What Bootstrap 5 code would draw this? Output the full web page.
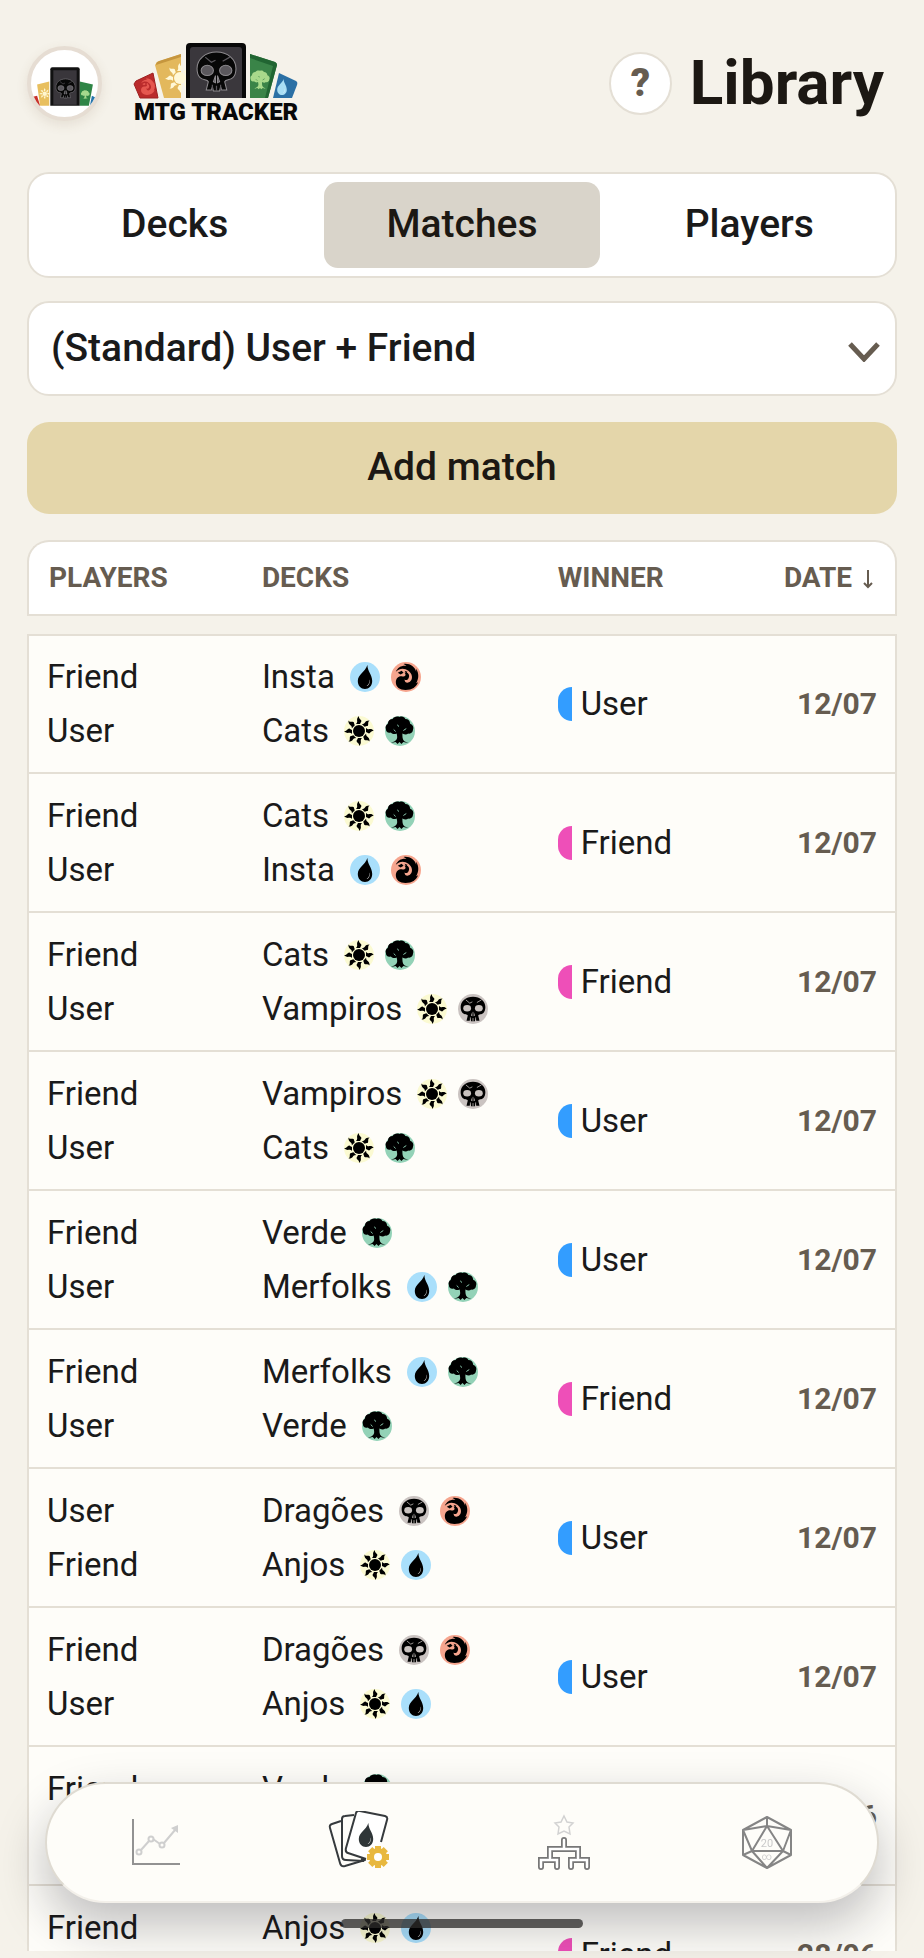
<!DOCTYPE html>
<html lang="en">
<head>
<meta charset="utf-8">
<meta name="viewport" content="width=device-width, initial-scale=1">
<title>MTG Tracker – Library</title>
<link href="https://cdn.jsdelivr.net/npm/bootstrap@5.3.0/dist/css/bootstrap.min.css" rel="stylesheet">
<style>
  :root { --ink: #1c1813; --muted: #665c50; --line: #e4dfd5; --paper: #fefdf9; }
  body { font-family: Roboto, "Noto Sans", sans-serif; color: #1a1a1a; background: #f5f2ea; }
  .screen { padding: 43px 27px 7px; }
  .profile { width: 75px; height: 75px; border: 4px solid #e6ddd3; background: #fff; box-shadow: 0 4px 12px rgba(120, 90, 60, .12); }
  .profile svg { width: 67px; height: 67px; }
  .heading { gap: 18px; }
  .help { width: 63px; height: 63px; border: 2px solid var(--line); background: #fff; color: var(--muted); font-size: 38px; line-height: 1; font-weight: 900; }
  .title { font-size: 62px; line-height: 80px; font-weight: 700; color: var(--ink); padding-right: 13px; }
  .panel { background: #fff; border: 2px solid var(--line); border-radius: 22px; }
  .tabs { margin-top: 49px; padding: 8px; gap: 12px; }
  .tabs button { border: 0; background: transparent; border-radius: 14px; height: 86px; font-size: 39px; font-weight: 500; line-height: 48px; color: #1a1a1a; padding: 0 0 3px; }
  .tabs button.active { background: #d9d4ca; color: var(--ink); }
  .season { margin-top: 23px; height: 95px; padding: 0 60px 1px 22px; font-size: 39px; font-weight: 500; color: #1a1a1a;
    background: #fff url("data:image/svg+xml,%3Csvg xmlns='http://www.w3.org/2000/svg' viewBox='0 0 32 20'%3E%3Cpath d='M2 2l14 15L30 2' fill='none' stroke='%23665c50' stroke-width='5'/%3E%3C/svg%3E") no-repeat right 15px top 39px / 32px 20px; }
  .add { margin-top: 26px; height: 92px; border-radius: 22px; background: #e4d6aa; font-size: 39px; font-weight: 500; color: var(--ink); padding: 0 0 2px; border: 0; }
  .add:hover { background: #dccc9a; }
  .list { margin-top: 26px; min-height: 0; }
  .matches { width: 100%; table-layout: fixed; border-collapse: separate; border-spacing: 0; }
  .matches th { height: 76px; padding: 0; background: #fff; color: var(--muted); font-size: 28px; line-height: 36px; font-weight: 700; border: solid var(--line); border-width: 2px 0; }
  .matches th:first-child { border-left-width: 2px; border-top-left-radius: 22px; padding-left: 20px; }
  .matches th:last-child { border-right-width: 2px; border-top-right-radius: 22px; padding-right: 22px; text-align: right; }
  .matches th svg { margin-left: 4px; }
  .matches tbody::before { content: ""; display: table-row; height: 18px; }
  .matches td { height: 139px; padding: 0; background: var(--paper); font-size: 33px; line-height: 54px; border-bottom: 2px solid var(--line); }
  .matches tr:first-child td { border-top: 2px solid var(--line); height: 140px; }
  .matches td:first-child { border-left: 2px solid var(--line); padding-left: 18px; }
  .matches td:last-child { border-right: 2px solid var(--line); padding-right: 18px; text-align: right; color: var(--muted); font-size: 30px; font-weight: 700; }
  .c1 { width: 27%; } .c2 { width: 34%; } .c3 { width: 21%; } .c4 { width: 18%; }
  .mana { width: 30px; height: 30px; margin-left: 11px; }
  .mana:first-of-type { margin-left: 15px; }
  .half { width: 14px; height: 34px; border-radius: 14px 0 0 14px; margin-right: 9px; }
  .blue { background: #339dff; } .pink { background: #ee4fb8; }
  .dock { left: 45px; right: 45px; bottom: 55px; height: 121px; padding: 0 8px; border: 2px solid #dfdbd2; border-bottom-color: #f3f0ea; border-radius: 61px; background: var(--paper); box-shadow: 0 22px 50px rgba(20, 20, 30, .27); }
  .dock a { display: flex; justify-content: center; align-items: center; flex: 1 1 0; }
  .dock svg { width: 64px; height: 64px; }
  .home-bar { bottom: 30px; left: 50%; transform: translateX(-50%); width: 242px; height: 9px; border-radius: 5px; background: rgba(45, 43, 42, .76); }
  .wordmark { font: 900 24px Roboto, sans-serif; }
</style>
</head>
<body>
<svg class="d-none" xmlns="http://www.w3.org/2000/svg">
  <symbol id="skull" viewBox="0 0 40 40">
    <path d="M20 1C9 1 1 8 1 17c0 4 1 7 3 9 3 3 7 1 8 4l-2 8h5l1-3 1 4h6l1-4 1 3h5l-2-8c1-3 5-1 8-4 2-2 3-5 3-9C39 8 31 1 20 1z"/>
    <g fill="var(--eye,#c9c2bf)"><ellipse cx="11" cy="19" rx="6" ry="5"/><ellipse cx="29" cy="19" rx="6" ry="5"/><path d="M19 24l-2 6 2 1zM21 24l2 6-2 1z"/></g>
    <path d="M9 6l6 5 4-2M26 10l7-4M16 33v6M20 34v5M24 33v6" fill="none" stroke="var(--eye,#c9c2bf)" stroke-width="1.2"/>
  </symbol>
  <symbol id="drop" viewBox="0 0 20 30"><path d="M13 0c0 8 6 12 6 20 0 6-4 10-9 10S1 26 1 20C1 12 10 9 13 0z"/><path d="M15 18c1 4 0 6-3 8 3 0 5-5 3-8z" fill="var(--shine,#fff)"/></symbol>
  <symbol id="sun" viewBox="0 0 30 30">
    <path id="ray" d="M12 8c3-3-1-4 3-8-1 3 4 4 2 6l-1 2z"/>
    <use href="#ray" transform="rotate(45 15 15)"/><use href="#ray" transform="rotate(90 15 15)"/><use href="#ray" transform="rotate(135 15 15)"/>
    <use href="#ray" transform="rotate(180 15 15)"/><use href="#ray" transform="rotate(225 15 15)"/><use href="#ray" transform="rotate(270 15 15)"/><use href="#ray" transform="rotate(315 15 15)"/>
    <circle cx="15" cy="15" r="6"/>
  </symbol>
  <symbol id="tree" viewBox="0 0 30 30"><path d="M15 1c3-1 5 0 6 2 3 0 5 2 5 5 3 1 4 4 3 6 0 3-3 5-5 4-2 2-4 1-6 0 0 4 0 6 2 8l4 2-5-1-2 2-2-2-2 2-2-2-5 1 4-2c3-2 3-4 2-8-2 1-4 1-6-1-3 1-5-1-5-3-1-3 0-5 2-6 0-3 2-5 5-5 1-2 4-3 7-2z"/><path d="M9 14l2 2M19 15l3-2M13 9l1 2" stroke="var(--gap,#8fcfb4)" stroke-width="1"/></symbol>
  <symbol id="fire" viewBox="0 0 30 30"><path d="M5 21C5 17 8 14 12 15C15 15 16 13 14 11C18 10 20 14 18 17C17 19 15 19 14 18C14 21 17 23 20 20C23 17 22 12 18 9C14 6 9 6 5 10C7 5 12 3 16 4L13 2C19 1 25 5 26 10L26 7C29 12 29 17 26 22L28 21C26 26 22 29 15 29C9 29 5 26 5 21z"/><path d="M7 11l4-2 2 2-3 2zM14 9l3 1-1 2z"/></symbol>
</svg>

<div class="screen vh-100 d-flex flex-column overflow-hidden">
  <header class="d-flex align-items-center">
    <button class="profile rounded-circle overflow-hidden p-0 flex-shrink-0" type="button" aria-label="Profile">
      <svg class="d-block" viewBox="4 4 66 66" aria-hidden="true">
        <path d="M6 50l4-1 3 10H8z" fill="#c8302a"/><path d="M10 38l12-3v24h-9z" fill="#e8bf5e"/>
        <path d="M52 35l13 3-4 21h-9z" fill="#2f8546"/><path d="M64 49l6 3-3 7h-5z" fill="#2675ad"/>
        <use href="#sun" x="12" y="40" width="11" height="14" fill="#fff6cf"/><use href="#tree" x="53" y="41" width="9" height="14" fill="#a5d98c"/>
        <path d="M23 59V23q0-2 2-2h25q2 0 2 2v36z" fill="#111"/><path d="M26 58V24h23v34z" fill="#39363b"/>
        <use href="#skull" x="28" y="30" width="20" height="24" fill="#070707" stroke="#88858a" style="--eye:#5b585d"/>
      </svg>
    </button>
    <svg class="ms-4 flex-shrink-0 ps-2 overflow-visible" width="174" height="80" viewBox="0 0 166 80" role="img" aria-label="MTG Tracker logo">
      <path d="M2 38l17-8 5 25H6L0 41z" fill="#ba2b2b" stroke="#9e2020"/><path d="M23 19l24-8v44H30L21 22z" fill="#e3b85c"/><path d="M22 22q0-3 3-4l22-7v3l-22 7z" fill="#c6963e"/>
      <path d="M116 11l25 8q2 1 2 3l-9 33h-18z" fill="#3a8448"/><path d="M116 11l25 8q2 1 2 3l-9 33h-3l8-32-23-8z" fill="#216532"/>
      <path d="M145 30l17 8q2 1 1 4l-5 13h-19z" fill="#2b70a5"/>
      <use href="#sun" x="31" y="19" width="30" height="32" fill="#fff8d7"/>
      <use href="#tree" x="116" y="20" width="20" height="34" fill="#a8d98b" style="--gap:#3a8448"/><use href="#drop" x="142" y="36" width="12" height="16" fill="#a9def4"/>
      <use href="#fire" x="4" y="34" width="18" height="19" fill="#e5574f"/>
      <path d="M52 55V4q0-4 4-4h52q4 0 4 4v51z" fill="#080808"/><path d="M56 55V7q0-3 3-3h46q3 0 3 3v48z" fill="#3a373c"/>
      <use href="#skull" x="62" y="8" width="41" height="41" fill="#070707" stroke="#8e8b8f" stroke-width="1" style="--eye:#5b585d"/>
      <text class="wordmark" x="0" y="77" fill="#080808">MTG TRACKER</text>
    </svg>
    <div class="heading ms-auto d-flex align-items-center">
      <button class="help rounded-circle p-0" type="button" aria-label="Help">?</button>
      <h1 class="title m-0">Library</h1>
    </div>
  </header>

  <nav class="tabs panel d-flex flex-shrink-0" aria-label="Library sections">
    <button type="button" class="flex-fill w-100">Decks</button>
    <button type="button" class="flex-fill w-100 active" aria-current="true">Matches</button>
    <button type="button" class="flex-fill w-100">Players</button>
  </nav>

  <select class="season panel form-select flex-shrink-0" aria-label="Season"><option>(Standard) User + Friend</option></select>
  <button type="button" class="add btn w-100 flex-shrink-0">Add match</button>

  <main class="list flex-grow-1 overflow-hidden">
    <table class="matches">
      <colgroup><col class="c1"><col class="c2"><col class="c3"><col class="c4"></colgroup>
      <thead><tr><th>PLAYERS</th><th>DECKS</th><th>WINNER</th><th>DATE <svg width="10" height="19" viewBox="0 0 10 19" aria-label="descending"><path d="M5 0v17M1 13l4 4 4-4" fill="none" stroke="#665c50" stroke-width="2"/></svg></th></tr></thead>
      <tbody id="rows"></tbody>
    </table>
  </main>
</div>

<nav class="dock position-fixed d-flex align-items-center" aria-label="Main">
  <a href="#stats" aria-label="Statistics"><svg viewBox="0 0 64 64" fill="none">
    <path d="M8 8v45h47" stroke="#929292" stroke-width="2"/>
    <g stroke="#cfcfcf" stroke-width="2"><path d="M16 39l8-9M28 28l7 5M39 32l11-13"/><circle cx="14" cy="41" r="2.500"/><circle cx="26" cy="28" r="2.500"/><circle cx="37" cy="34" r="2.500"/></g><path d="M46 17l7-3v8z" fill="#cfcfcf"/></svg></a>
  <a href="#library" aria-label="Library" aria-current="page"><svg viewBox="0 0 64 64" fill="none" stroke="#363a3d" stroke-width="2" stroke-linejoin="round">
    <path d="M13 10L4 13q-3 1-2 4l10 35q1 4 5 3l20-6-4-1"/><path d="M26 4l-9 1q-3 0-3 3v37q0 4 4 4l18 1"/>
    <path d="M53 31l6-22q1-3-2-4L32 0q-3-1-4 2L18 37q-1 4 2 5l18 6" fill="#fff"/>
    <use href="#drop" x="29" y="12" width="18" height="24" fill="#2f3638" stroke="none"/>
    <g fill="#e8b83f" stroke="none"><circle cx="50" cy="46" r="9"/><path d="M47 35h6v22h-6zM39 43h22v6H39z"/><path d="M47 35h6v22h-6zM39 43h22v6H39z" transform="rotate(45 50 46)"/></g><circle cx="50" cy="46" r="4" fill="#fff" stroke="none"/></svg></a>
  <a href="#tournaments" aria-label="Tournaments"><svg viewBox="0 0 64 64" fill="none">
    <path d="M32 5l3 6 6 1-4 4 1 7-6-3-6 3 1-7-4-4 6-1z" stroke="#d2d2d2" stroke-width="1.500"/>
    <path d="M32 29v9M18 47V38h28v9M9 56v-7h16v7M39 56v-7h16v7" stroke="#777" stroke-width="6" stroke-linecap="round"/>
    <path d="M32 29v9M18 47V38h28v9M9 56v-7h16v7M39 56v-7h16v7" stroke="#fff" stroke-width="2.500" stroke-linecap="round"/></svg></a>
  <a href="#life" aria-label="Dice"><svg viewBox="0 0 64 64" fill="none" stroke="#858585" stroke-width="2" stroke-linejoin="round">
    <path d="M32 6l24 13v25L32 57 8 44V19zM32 6v9M32 15L8 19l9 21zM32 15l24 4-8 21zM17 40h31L32 57zM17 40l-9 4M48 40l8 4"/>
    <text x="32" y="36" text-anchor="middle" font-size="11" fill="#c9c9c9" stroke="none">20</text><text x="32" y="49" text-anchor="middle" font-size="10" fill="#d0d0d0" stroke="none">∞</text></svg></a>
</nav>
<div class="home-bar position-fixed" aria-hidden="true"></div>

<script src="https://cdn.jsdelivr.net/npm/bootstrap@5.3.0/dist/js/bootstrap.bundle.min.js"></script>
<script>
  // Mana symbols: disc colour and the placement of the glyph on it
  const mana = {
    W: ['#fbfad2', 'sun', 0, 0, 30], U: ['#a9dffb', 'drop', 5, 3, 24], B: ['#cac3c1', 'skull', 2, 2, 26],
    R: ['#f6a58e', 'fire', 0, 0, 29], G: ['#93d2b7', 'tree', 0, 0, 29]
  };
  const icon = k => {
    const [fill, id, x, y, s] = mana[k];
    return `<svg class="mana" viewBox="0 0 30 30" aria-hidden="true"><circle cx="15" cy="15" r="15" fill="${fill}"/><use href="#${id}" x="${x}" y="${y}" width="${id === 'drop' ? 20 : s}" height="${s}"/></svg>`;
  };
  const decks = { Insta: 'UR', Cats: 'WG', Vampiros: 'WB', Verde: 'G', Merfolks: 'UG', 'Dragões': 'BR', Anjos: 'WU' };
  const games = [
    ['Friend', 'User', 'Insta', 'Cats', 'User', '12/07'],
    ['Friend', 'User', 'Cats', 'Insta', 'Friend', '12/07'],
    ['Friend', 'User', 'Cats', 'Vampiros', 'Friend', '12/07'],
    ['Friend', 'User', 'Vampiros', 'Cats', 'User', '12/07'],
    ['Friend', 'User', 'Verde', 'Merfolks', 'User', '12/07'],
    ['Friend', 'User', 'Merfolks', 'Verde', 'Friend', '12/07'],
    ['User', 'Friend', 'Dragões', 'Anjos', 'User', '12/07'],
    ['Friend', 'User', 'Dragões', 'Anjos', 'User', '12/07'],
    ['Friend', 'User', 'Verde', 'Anjos', 'User', '28/06'],
    ['Friend', 'User', 'Anjos', 'Verde', 'Friend', '28/06']
  ];
  const deck = n => `<div class="d-flex align-items-center">${n}${[...decks[n]].map(icon).join('')}</div>`;
  document.getElementById('rows').innerHTML = games.map(([a, b, d, e, w, t]) =>
    `<tr><td><div>${a}</div><div>${b}</div></td><td>${deck(d)}${deck(e)}</td>` +
    `<td><div class="d-flex align-items-center"><span class="half ${w === 'User' ? 'blue' : 'pink'}"></span>${w}</div></td><td>${t}</td></tr>`).join('');
</script>
</body>
</html>
